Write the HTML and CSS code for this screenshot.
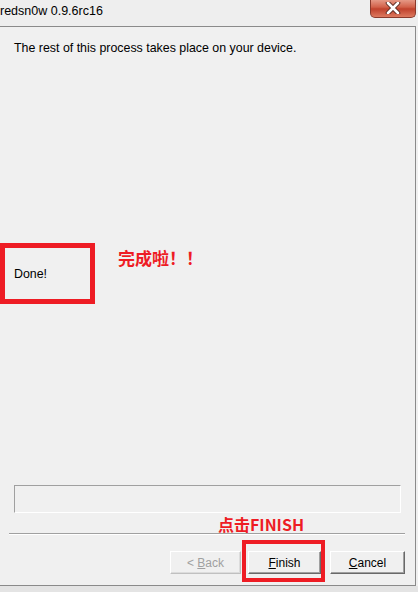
FILE: index.html
```html
<!DOCTYPE html>
<html lang="en">
<head>
    <meta charset="UTF-8">
    <title>redsn0w 0.9.6rc16</title>
    <link rel="stylesheet" href="styles.css">
</head>
<body>
<div class="window">
    <!-- Title bar -->
    <div class="titlebar">
        <div class="title">redsn0w 0.9.6rc16</div>
        <div class="close-btn">
            <svg width="20" height="12" viewBox="0 0 20 12">
                <path d="M5 1 L15 11 M15 1 L5 11" stroke="#5a2a22" stroke-width="4.5" stroke-linecap="round"/>
                <path d="M5 1 L15 11 M15 1 L5 11" stroke="#ffffff" stroke-width="2.6" stroke-linecap="round"/>
            </svg>
        </div>
    </div>

    <!-- Wizard page -->
    <div class="panel">
        <div class="intro">The rest of this process takes place on your device.</div>

        <div class="done-row">
            <div class="done-box">Done!</div>
            <div class="note">完成啦！！</div>
        </div>

        <div class="progress"></div>

        <div class="hint">点击FINISH</div>
        <div class="separator"></div>

        <div class="buttons">
            <button class="btn btn-back" disabled>&lt; <u>B</u>ack</button>
            <div class="finish-wrap">
                <button class="btn btn-finish"><u>F</u>inish</button>
            </div>
            <button class="btn btn-cancel"><u>C</u>ancel</button>
        </div>
    </div>
    <div class="bottom-strip"></div>
</div>
</body>
</html>
```

FILE: styles.css
```css
/* Global styles */
* {
    margin: 0;
    padding: 0;
    box-sizing: border-box;
}

body {
    font-family: "Liberation Sans", Arial, sans-serif;
    font-size: 12.4px;
    background-color: #f0f0f0;
    color: #000;
    width: 418px;
    height: 592px;
    overflow: hidden;
}

/* Title bar */
.titlebar {
    height: 26px;
    display: flex;
    justify-content: space-between;
    align-items: flex-start;
    background-color: #eeeeee;
}

.title {
    font-size: 12.5px;
    line-height: 14px;
    padding-top: 4px;
    color: #000;
}

.close-btn {
    width: 46px;
    height: 19px;
    margin-right: 2px;
    margin-top: -1px;
    border: 1px solid #8a3a2c;
    border-top: none;
    border-radius: 0 0 5px 5px;
    background: linear-gradient(#e8a08e 0%, #d2614a 45%, #c0412c 55%, #dd7a60 100%);
    display: flex;
    align-items: center;
    justify-content: center;
}

/* Panel */
.panel {
    height: 560px;
    width: 416px;
    border-top: 1px solid #8a8a8a;
    border-right: 1px solid #8a8a8a;
    border-bottom: 1px solid #8a8a8a;
    display: flex;
    flex-direction: column;
}

.intro {
    padding: 14px 0 0 14px;
    line-height: 14px;
}

.done-row {
    display: flex;
    align-items: flex-start;
    margin-top: 188px;
}

.done-box {
    width: 95px;
    height: 61px;
    border: 5px solid #ee1c24;
    display: flex;
    align-items: center;
    padding-left: 9px;
}

.note {
    margin-left: 23px;
    margin-top: 4px;
    font-family: "Noto Sans CJK SC", sans-serif;
    font-size: 17px;
    font-weight: bold;
    line-height: 21px;
    color: #ee1c24;
}

.progress {
    margin: 181px 0 0 14px;
    width: 387px;
    height: 28px;
    border-top: 1px solid #a0a0a0;
    border-left: 1px solid #a0a0a0;
    border-bottom: 1px solid #ffffff;
    border-right: 1px solid #ffffff;
}

.hint {
    margin-top: 3px;
    padding-left: 218px;
    font-family: "Noto Sans CJK SC", sans-serif;
    font-size: 16px;
    font-weight: bold;
    line-height: 17px;
    color: #ee1c24;
}

.separator {
    margin-left: 9px;
    width: 396px;
    height: 2px;
    border-top: 1px solid #a0a0a0;
    border-bottom: 1px solid #ffffff;
}

/* Buttons */
.buttons {
    display: flex;
    justify-content: flex-end;
    margin-top: 16px;
    padding-right: 10px;
}

.btn {
    height: 23px;
    font-family: "Liberation Sans", Arial, sans-serif;
    font-size: 12px;
    background-color: #f0f0f0;
    color: #000;
    border-top: 1px solid #ffffff;
    border-left: 1px solid #ffffff;
    border-right: 1px solid #696969;
    border-bottom: 1px solid #696969;
    box-shadow: inset -1px -1px 0 #a0a0a0;
}

.btn-back {
    width: 71px;
    color: #a0a0a0;
    border-right-color: #c0c0c0;
    border-bottom-color: #c0c0c0;
    box-shadow: inset -1px -1px 0 #dcdcdc;
}

.finish-wrap {
    position: relative;
    margin-left: 7px;
}

.finish-wrap::after {
    content: "";
    position: absolute;
    left: -6px;
    top: -11px;
    right: -4px;
    bottom: -8px;
    border: 4px solid #ee1c24;
}

.btn-finish {
    width: 73px;
}

.btn-cancel {
    width: 75px;
    margin-left: 9px;
}

.bottom-strip {
    height: 6px;
    background-color: #e4e4e4;
}
```
